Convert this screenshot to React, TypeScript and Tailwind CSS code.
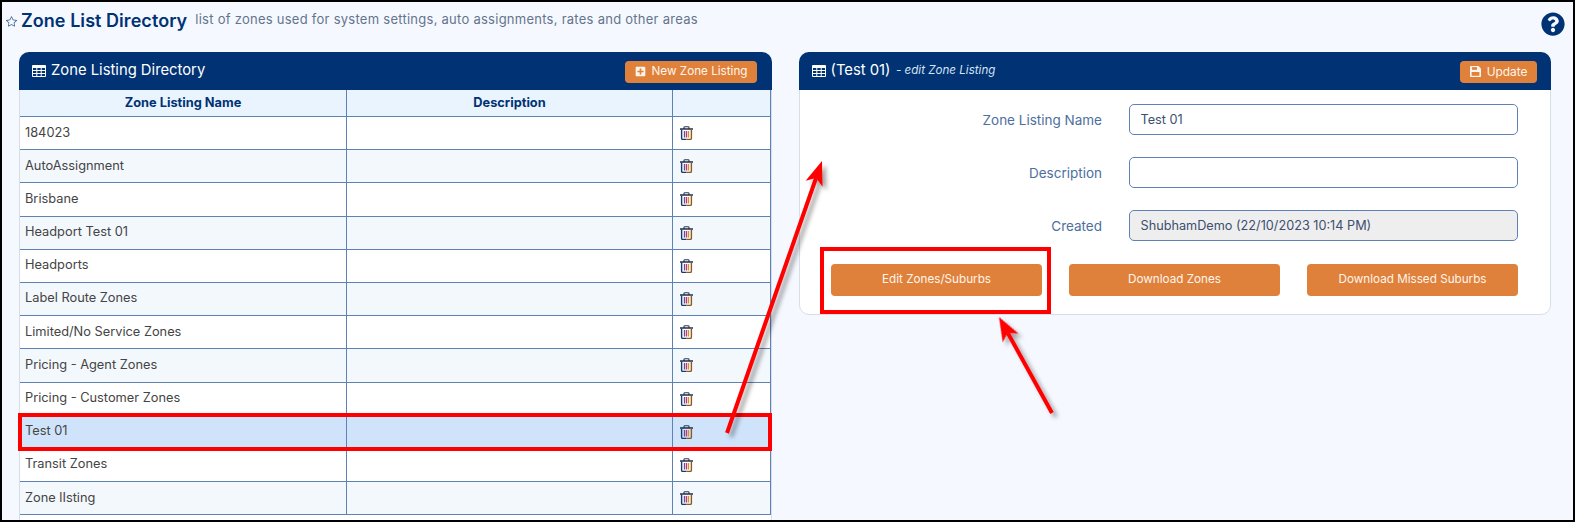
import { FaPlusSquare, FaQuestionCircle } from 'react-icons/fa';
import { BsStar } from 'react-icons/bs';

const ROWS = [
  '184023',
  'AutoAssignment',
  'Brisbane',
  'Headport Test 01',
  'Headports',
  'Label Route Zones',
  'Limited/No Service Zones',
  'Pricing - Agent Zones',
  'Pricing - Customer Zones',
  'Test 01',
  'Transit Zones',
  'Zone lIsting',
];

function rowColor(name: string, index: number) {
  if (name === 'Test 01') return 'bg-[#cfe4fb]';
  return index % 2 === 0 ? 'bg-white' : 'bg-[#f3f8fd]';
}

function TableIcon() {
  return (
    <svg width="14" height="12" viewBox="0 0 14 12" className="shrink-0">
      <rect x="0" y="0" width="14" height="12" rx="1" fill="#ffffff" />
      <rect x="1" y="3" width="3.3" height="2" fill="#003274" />
      <rect x="5.3" y="3" width="3.4" height="2" fill="#003274" />
      <rect x="9.7" y="3" width="3.3" height="2" fill="#003274" />
      <rect x="1" y="6" width="3.3" height="2" fill="#003274" />
      <rect x="5.3" y="6" width="3.4" height="2" fill="#003274" />
      <rect x="9.7" y="6" width="3.3" height="2" fill="#003274" />
      <rect x="1" y="9" width="3.3" height="2" fill="#003274" />
      <rect x="5.3" y="9" width="3.4" height="2" fill="#003274" />
      <rect x="9.7" y="9" width="3.3" height="2" fill="#003274" />
    </svg>
  );
}

function SaveIcon() {
  return (
    <svg width="11" height="11" viewBox="0 0 11 11" className="shrink-0">
      <path d="M1 0H8.5L11 2.5V10C11 10.6 10.6 11 10 11H1C.4 11 0 10.6 0 10V1C0 .4 .4 0 1 0Z" fill="#fdf3ea" />
      <rect x="2" y="1.2" width="5" height="2.6" fill="#df813b" />
      <rect x="1.6" y="6" width="7.8" height="3.8" fill="#df813b" />
    </svg>
  );
}

function TrashIcon() {
  return (
    <svg width="13" height="14" viewBox="0 0 13 14" fill="none" className="shrink-0">
      <path d="M4 3V1.5C4 1 4.4 .7 4.9 .7H8.1C8.6 .7 9 1 9 1.5V3" stroke="#2c3858" strokeWidth="1.1" />
      <path d="M0 3H13" stroke="#14213f" strokeWidth="1.4" />
      <path d="M1.6 3.4V12.2C1.6 12.9 2.1 13.4 2.8 13.4H6.5" stroke="#173a6b" strokeWidth="1.4" />
      <path d="M11.4 3.4V12.2C11.4 12.9 10.9 13.4 10.2 13.4H6.5" stroke="#8a5a20" strokeWidth="1.4" />
      <path d="M4.5 5V11.5" stroke="#6b4a9c" strokeWidth="1.3" />
      <path d="M6.5 5V11.5" stroke="#c03a60" strokeWidth="1.3" />
      <path d="M8.5 5V11.5" stroke="#d48f30" strokeWidth="1.3" />
    </svg>
  );
}

function FormRow({ label, value, disabled }: { label: string; value: string; disabled?: boolean }) {
  return (
    <div className="flex items-center h-[31px]">
      <label className="w-[302px] pt-[2px] text-right text-[13.5px] text-[#4d6f9e]">{label}</label>
      <div
        className={`ml-[27px] w-[389px] h-[31px] flex items-center px-[10.5px] border border-[#5f82b5] rounded-[5px] text-[12.7px] text-[#3d4f70] ${
          disabled ? 'bg-[#eeeeee]' : 'bg-white'
        }`}
      >
        {value}
      </div>
    </div>
  );
}

function ActionButton({ children }: { children: string }) {
  return (
    <button className="w-[211px] h-[32px] rounded-[4px] bg-[#df813b] text-[11.7px] font-normal text-[#fff5ec]">
      {children}
    </button>
  );
}

function Arrow({ x1, y1, x2, y2 }: { x1: number; y1: number; x2: number; y2: number }) {
  const angle = (Math.atan2(y2 - y1, x2 - x1) * 180) / Math.PI;
  const len = Math.hypot(x2 - x1, y2 - y1);
  return (
    <g transform={`translate(${x1} ${y1}) rotate(${angle})`}>
      <line x1="0" y1="0" x2={len - 18} y2="0" stroke="#ff0000" strokeWidth="4" />
      <polygon points={`${len},0 ${len - 24},-9 ${len - 18},0 ${len - 24},9`} fill="#ff0000" />
    </g>
  );
}

export default function App() {
  return (
    <div
      className="relative h-[522px] w-[1575px] overflow-hidden border-2 border-black bg-[#f5f9ff]"
      style={{ fontFamily: 'Inter, "Liberation Sans", sans-serif' }}
    >
      <div className="flex items-center h-[36px] pl-[4px] pr-[8px]">
        <BsStar className="mt-[3px] w-[11px] h-[11px] text-[#3f5f8f]" />
        <h1 className="ml-[4px] text-[18px] font-semibold tracking-[0.05px] text-[#003274]">Zone List Directory</h1>
        <span className="ml-[8px] text-[13px] text-[#64748b] tracking-[0.26px]">
          list of zones used for system settings, auto assignments, rates and other areas
        </span>
        <FaQuestionCircle className="ml-auto mt-[7px] w-[24px] h-[24px] text-[#003274]" />
      </div>

      <div className="flex items-start gap-[27px] pl-[17px] pt-[14px]">
        <section className="w-[753px] h-[480px] rounded-t-[10px] bg-white border-x border-[#d8dee8]">
          <header className="flex items-center justify-between h-[38px] -mx-px pl-[13px] pr-[15px] rounded-t-[10px] bg-[#003274] text-white">
            <div className="flex items-center gap-[5px] mb-[1px] text-[14.8px]">
              <TableIcon />
              Zone Listing Directory
            </div>
            <button className="flex items-center gap-[6px] h-[22px] mt-[1px] px-[9.5px] rounded-[4px] bg-[#df813b] text-[11.7px] font-normal text-[#fff5ec]">
              <FaPlusSquare className="w-[11px] h-[11px]" />
              New Zone Listing
            </button>
          </header>
          <div className="grid grid-cols-[327px_326px_98px] h-[27px] bg-[#eaf4fe] text-[12.8px] font-bold text-[#003274] border-b border-[#5f82b5]">
            <div className="flex items-center justify-center border-r border-[#5f82b5]">Zone Listing Name</div>
            <div className="flex items-center justify-center border-r border-[#5f82b5]">Description</div>
            <div className="border-r border-[#5f82b5]" />
          </div>
          {ROWS.map((name, i) => (
            <div
              key={name}
              className={`grid grid-cols-[327px_326px_98px] h-[33.2px] border-b border-[#5f82b5] text-[12.8px] text-[#444444] ${rowColor(name, i)}`}
            >
              <div className="flex items-center pl-[5px] pb-[2px] border-r border-[#5f82b5]">{name}</div>
              <div className="border-r border-[#5f82b5]" />
              <div className="flex items-center pl-[7px] border-r border-[#5f82b5]">
                <TrashIcon />
              </div>
            </div>
          ))}
        </section>

        <section className="w-[752px] h-[263px] rounded-[10px] bg-white border border-[#d8dee8]">
          <header className="flex items-center justify-between h-[38px] -mx-px -mt-px pl-[13px] pr-[14px] rounded-t-[10px] bg-[#003274] text-white">
            <div className="flex items-center gap-[4.5px] mb-[1px] text-[14.8px]">
              <TableIcon />
              (Test 01)
              <span className="ml-[1px] text-[11.6px] italic text-[#d5e2f2]">- edit Zone Listing</span>
            </div>
            <button className="flex items-center gap-[6px] h-[22px] mt-[1px] px-[9.5px] rounded-[4px] bg-[#df813b] text-[11.9px] font-normal text-[#fff5ec]">
              <SaveIcon />
              Update
            </button>
          </header>
          <div className="flex flex-col gap-[22px] pt-[14px]">
            <FormRow label="Zone Listing Name" value="Test 01" />
            <FormRow label="Description" value="" />
            <FormRow label="Created" value="ShubhamDemo (22/10/2023 10:14 PM)" disabled />
          </div>
          <div className="flex justify-between pt-[23px] pl-[31px] pr-[32px]">
            <ActionButton>Edit Zones/Suburbs</ActionButton>
            <ActionButton>Download Zones</ActionButton>
            <ActionButton>Download Missed Suburbs</ActionButton>
          </div>
        </section>
      </div>

      {/* annotations drawn on top of the screenshot */}
      <div className="absolute left-[16px] top-[411px] w-[754px] h-[38px] border-[4px] border-[#ff0000]" />
      <div className="absolute left-[818px] top-[245px] w-[231px] h-[67px] border-[4px] border-[#ff0000]" />
      <svg className="absolute left-[-2px] top-[-2px] w-[1575px] h-[522px] pointer-events-none" viewBox="0 0 1575 522">
        <defs>
          <filter id="arrowShadow" x="-30%" y="-30%" width="160%" height="160%">
            <feDropShadow dx="4" dy="4" stdDeviation="2" floodColor="#000000" floodOpacity="0.35" />
          </filter>
        </defs>
        <g filter="url(#arrowShadow)">
          <Arrow x1={727} y1={433} x2={822} y2={161} />
          <Arrow x1={1052} y1={413} x2={999} y2={317} />
        </g>
      </svg>
    </div>
  );
}
